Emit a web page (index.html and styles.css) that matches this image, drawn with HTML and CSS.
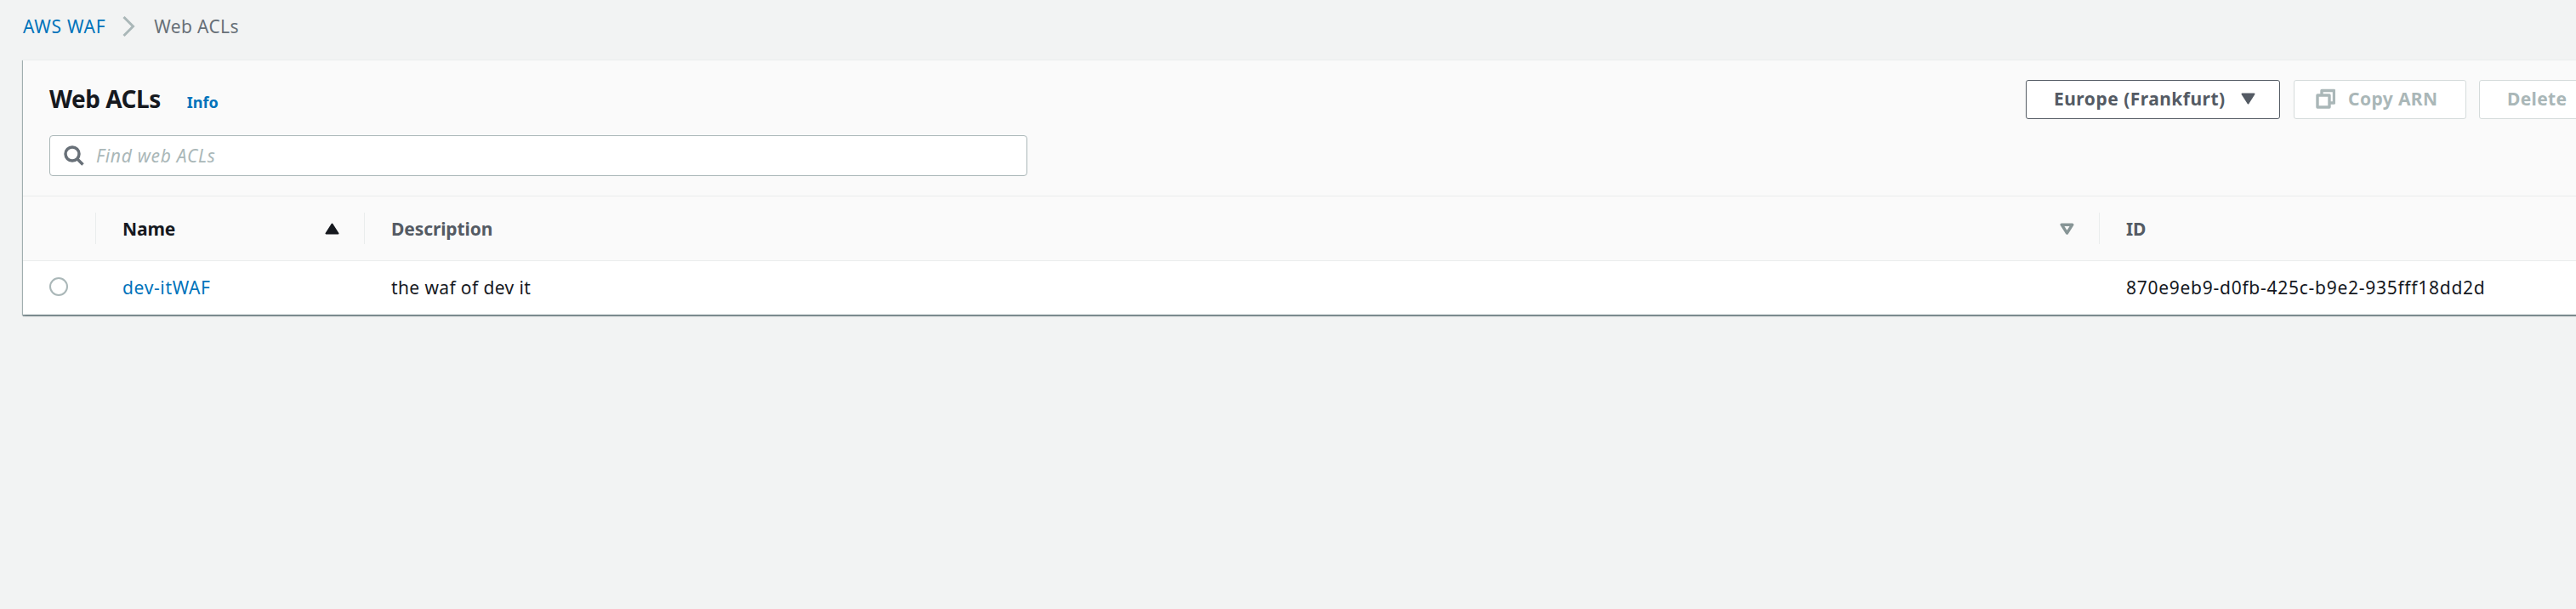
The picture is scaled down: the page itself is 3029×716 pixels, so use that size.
FILE: index.html
```html
<!DOCTYPE html>
<html lang="en">
<head>
<meta charset="utf-8">
<title>Web ACLs</title>
<link rel="stylesheet" href="styles.css">
</head>
<body>
<nav class="breadcrumb">
  <a class="link crumb">AWS WAF</a>
  <svg class="chevron" width="16" height="26" viewBox="0 0 16 26"><path d="M1.500 2 L12.500 13 L1.500 24" fill="none" stroke="#aab7b8" stroke-width="3"/></svg>
  <span class="crumb-current">Web ACLs</span>
</nav>
<main class="card">
  <header class="header">
    <div class="title-row">
      <h1 class="title">Web ACLs</h1>
      <a class="info">Info</a>
      <div class="actions">
        <button class="button region"><span>Europe (Frankfurt)</span><svg width="17" height="14" viewBox="0 0 17 14"><path d="M1.500 1.500h14L8.500 12.500z" fill="#545b64" stroke="#545b64" stroke-width="2" stroke-linejoin="round"/></svg></button>
        <button class="button copy disabled"><svg width="24" height="24" viewBox="0 0 24 24"><path d="M3 8h14v14H3zM8 8V2.500h14.500V17H17" fill="none" stroke="#aab7b8" stroke-width="3.400" stroke-linejoin="round"/></svg><span>Copy ARN</span></button>
        <button class="button delete disabled"><span>Delete</span></button>
      </div>
    </div>
    <div class="search">
      <svg width="24" height="24" viewBox="0 0 24 24"><circle cx="10" cy="10" r="8" fill="none" stroke="#687078" stroke-width="3.500"/><path d="M15.500 15.500l7 7" stroke="#687078" stroke-width="3.500"/></svg>
      <span class="placeholder">Find web ACLs</span>
    </div>
  </header>
  <div class="grid head">
    <div class="cell"></div>
    <div class="cell divided active"><span>Name</span><svg width="17" height="14" viewBox="0 0 17 14"><path d="M1.500 12.500h14L8.500 1.500z" fill="#16191f" stroke="#16191f" stroke-width="2" stroke-linejoin="round"/></svg></div>
    <div class="cell divided"><span>Description</span><svg width="17" height="14" viewBox="0 0 17 14"><path d="M2.200 2.200h12.600L8.500 12z" fill="none" stroke="#879596" stroke-width="3.400" stroke-linejoin="round"/></svg></div>
    <div class="cell divided"><span>ID</span></div>
  </div>
  <div class="grid row">
    <div class="cell select"><span class="radio"></span></div>
    <div class="cell"><a class="link name">dev-itWAF</a></div>
    <div class="cell"><span class="description">the waf of dev it</span></div>
    <div class="cell"><span class="id">870e9eb9-d0fb-425c-b9e2-935fff18dd2d</span></div>
  </div>
</main>
</body>
</html>
```
FILE: styles.css
```css
* { box-sizing: border-box; }
body { margin: 0; height: 716px; overflow: hidden; background: #f2f3f3; color: #16191f; font: 21px/30px "Noto Sans", sans-serif; }
.link { color: #0073bb; }
.breadcrumb { display: flex; align-items: center; height: 70px; padding: 0 0 8px 27px; color: #687078; }
.crumb { letter-spacing: .75px; }
.crumb-current { letter-spacing: .35px; }
.chevron { margin: 0 21px 0 20px; }
.card { width: 3020px; margin-left: 27px; background: #fff; box-shadow: 0 2px 1px rgba(0, 28, 36, .3), 1.5px 1.5px 1.5px rgba(0, 28, 36, .15), -1px 1px 1px #aab7b8; }
.header { height: 161px; padding: 23px 0 0 31px; background: #fafafa; border-top: 1px solid #eaeded; border-bottom: 1px solid #eaeded; }
.title-row { display: flex; height: 65px; }
.title { margin: 0; font-size: 28px; line-height: 45px; letter-spacing: -.5px; }
.info { margin-left: 31px; color: #0073bb; font-size: 18px; font-weight: 700; line-height: 52px; }
.actions { display: flex; margin-left: auto; gap: 15px; }
.button { display: flex; align-items: center; height: 46px; padding: 0 0 2px; border: 1px solid #545b64; border-radius: 3px; background: #fff; color: #545b64; font: 700 21px/30px "Noto Sans", sans-serif; white-space: nowrap; }
.region { width: 299px; margin-right: 1px; padding-left: 32px; gap: 18px; letter-spacing: .48px; }
.disabled { border-color: #d5dbdb; color: #aab7b8; }
.copy { width: 203px; padding-left: 24px; gap: 15px; letter-spacing: .4px; }
.delete { width: 132px; padding-left: 32px; letter-spacing: .35px; }
.search { display: flex; align-items: center; width: 1150px; height: 48px; padding-left: 16px; gap: 14px; border: 1px solid #aab7b8; border-radius: 4px; background: #fff; }
.placeholder { padding-bottom: 1px; color: #aab7b8; font-style: italic; letter-spacing: .7px; }
.grid { display: grid; grid-template-columns: 85px 316px 2040px 1fr; }
.cell { display: flex; align-items: center; padding-left: 32px; }
.select { padding-left: 31px; }
.head { height: 76px; padding: 19px 0; background: #fafafa; border-bottom: 1px solid #eaeded; color: #545b64; font-weight: 700; letter-spacing: -.1px; }
.head svg { margin-left: auto; margin-right: 29px; }
.divided { padding-left: 31px; border-left: 1px solid #eaeded; }
.active { color: #16191f; }
.row { height: 63px; border-bottom: 1px solid #eaeded; }
.name { letter-spacing: .65px; }
.description { letter-spacing: .38px; }
.id { letter-spacing: .73px; }
.radio { width: 22px; height: 22px; margin-bottom: 2px; border: 2px solid #aab7b8; border-radius: 50%; }
```
